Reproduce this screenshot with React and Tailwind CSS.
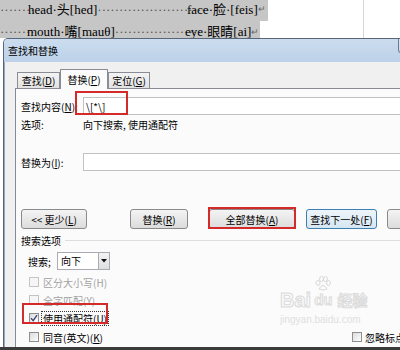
import React from "react";

function Dots({ n, className = "" }) {
  return <span className={`whitespace-nowrap text-[#555] ${className}`}>{"·".repeat(n)}</span>;
}

function Tab({ active, className = "", children }) {
  return (
    <div
      className={`flex items-center justify-center border border-b-0 border-[#898c95] ${
        active
          ? "relative z-10 -mb-px h-[20px] bg-[#fbfbfb]"
          : "h-[16px] bg-gradient-to-b from-[#f3f3f3] to-[#e3e3e3]"
      } ${className}`}
    >
      {children}
    </div>
  );
}

function Btn({ className = "", blue, children }) {
  return (
    <div
      className={`flex h-[20px] items-center justify-center rounded-[3px] border ${
        blue
          ? "border-[#3c7fb1] bg-gradient-to-b from-[#eef5fa] to-[#d6e6f2]"
          : "border-[#8a8a8a] bg-gradient-to-b from-[#f4f4f4] to-[#dcdcdc]"
      } ${className}`}
    >
      {children}
    </div>
  );
}

function Check({ checked, disabled }) {
  return (
    <span
      className={`flex h-[10px] w-[10px] shrink-0 items-center justify-center border ${
        disabled ? "border-[#c4c4c4] bg-[#f6f6f6]" : "border-[#8e8f8f] bg-gradient-to-br from-[#dcdcdc] to-[#fdfdfd]"
      }`}
    >
      {checked && (
        <svg width="8" height="8" viewBox="0 0 8 8">
          <path d="M1 4.2 L3.2 6.6 L7 1.2" fill="none" stroke="#3b4a7a" strokeWidth="1.4" />
        </svg>
      )}
    </span>
  );
}

export default function App() {
  return (
    <div className="relative h-[350px] w-[400px] overflow-hidden bg-white font-['Noto_Sans_CJK_SC',sans-serif] text-[10px] text-black">
      {/* document behind the dialog */}
      <div className="flex h-[38px] font-['Liberation_Serif','Noto_Sans_CJK_SC',serif] text-[13px]">
        <div className="flex w-[363px] flex-col">
          <div className="flex h-[21px] leading-[19px]">
            <div className="flex w-[268px] bg-[#c6c6c6]">
              <div className="flex w-[187px] shrink-0">
                <Dots n={8} className="w-[28px] shrink-0" />
                <span className="whitespace-nowrap">head·头[hed]</span>
                <Dots n={26} />
              </div>
              <span className="whitespace-nowrap">face·脸·[feis]</span>
              <span className="text-[9px] text-[#666]">↵</span>
            </div>
          </div>
          <div className="flex h-[17px] overflow-hidden leading-[22px]">
            <div className="flex w-[260px] bg-[#c6c6c6]">
              <div className="flex w-[185px] shrink-0">
                <Dots n={8} className="w-[27px] shrink-0" />
                <span className="whitespace-nowrap">mouth·嘴[mauθ]</span>
                <Dots n={20} />
              </div>
              <span className="whitespace-nowrap">eye·眼睛[ai]</span>
              <span className="text-[9px] text-[#666]">↵</span>
            </div>
          </div>
        </div>
        <div className="flex-1 border-l border-[#d6d6d6]" />
      </div>

      {/* dialog */}
      <div className="ml-[3px] flex h-[309px] w-[440px] flex-col overflow-hidden rounded-t-[5px] border border-b-0 border-[#56677c] bg-[#f0f0f0]">
        <div className="flex h-[23px] shrink-0 items-start justify-between bg-gradient-to-b from-[#cbdcee] to-[#bcd1e8]">
          <span className="pl-[4px] leading-[24px]">查找和替换</span>
          <div className="h-[14px] w-[44px] rounded-b-[3px] border border-t-0 border-[#6a7b90] bg-gradient-to-b from-[#dbe6f2] to-[#c5d6e9]" />
        </div>

        <div className="flex flex-1 flex-col border-l border-[#9aa6b5]">
          <div className="flex h-[26px] shrink-0 items-end pl-[12px]">
            <Tab className="w-[43px]">
              查找(<u>D</u>)
            </Tab>
            <Tab active className="w-[48px]">
              替换(<u>P</u>)
            </Tab>
            <Tab className="w-[42px]">
              定位(<u>G</u>)
            </Tab>
          </div>

          <div className="ml-[10px] flex-1 border-l border-t border-[#898c95] bg-[#fbfbfb] pl-[5px]">
            <div className="mt-[8px] flex h-[18px] items-center">
              <span className="w-[62px] shrink-0">
                查找内容(<u>N</u>):
              </span>
              <div className="flex h-[18px] flex-1 items-center border border-[#c2c2c2] bg-white pl-[2px]">\[*\]</div>
            </div>
            <div className="flex h-[18px] items-center">
              <span className="w-[62px] shrink-0">选项:</span>
              <span>向下搜索, 使用通配符</span>
            </div>
            <div className="mt-[20px] flex h-[18px] items-center">
              <span className="w-[62px] shrink-0">
                替换为(<u>I</u>):
              </span>
              <div className="h-[18px] flex-1 border border-[#c2c2c2] bg-white" />
            </div>

            <div className="mt-[38px] flex h-[20px]">
              <Btn className="w-[66px] shrink-0">
                &lt;&lt; 更少(<u>L</u>)
              </Btn>
              <Btn className="ml-[43px] w-[58px] shrink-0">
                替换(<u>R</u>)
              </Btn>
              <Btn className="ml-[21px] w-[86px] shrink-0">
                全部替换(<u>A</u>)
              </Btn>
              <Btn blue className="ml-[11px] w-[71px] shrink-0">
                查找下一处(<u>F</u>)
              </Btn>
              <Btn className="ml-[10px] w-[70px] shrink-0">取消</Btn>
            </div>

            <div className="mt-[4px] flex h-[14px] items-center">
              <span>搜索选项</span>
              <div className="ml-[4px] h-px flex-1 bg-[#dedede]" />
            </div>

            <div className="mt-[5px] flex h-[18px] items-center">
              <span className="ml-[7px] w-[29px] shrink-0">搜索;</span>
              <div className="flex h-[18px] w-[53px] border border-[#a9abb2] bg-white">
                <span className="flex-1 pl-[3px] leading-[16px]">向下</span>
                <div className="flex w-[11px] items-center justify-center border-l border-[#a9abb2] bg-gradient-to-b from-[#f4f4f4] to-[#dedede]">
                  <svg width="6" height="4" viewBox="0 0 6 4">
                    <polygon points="0,0 6,0 3,3.5" fill="#111" />
                  </svg>
                </div>
              </div>
            </div>

            <div className="mt-[3px] flex h-[18px] items-center gap-[4px] pl-[8px] text-[#a2a2a2]">
              <Check disabled />
              <span>区分大小写(H)</span>
            </div>
            <div className="flex h-[18px] items-center gap-[4px] pl-[8px] text-[#a2a2a2]">
              <Check disabled />
              <span>全字匹配(Y)</span>
            </div>
            <div className="flex h-[18px] items-center gap-[2px] pl-[8px]">
              <Check checked />
              <span className="border border-dotted border-[#333] px-[1px] leading-[13px]">使用通配符(U)</span>
            </div>
            <div className="mt-[1px] flex h-[18px] items-center pl-[8px]">
              <div className="flex w-[323px] shrink-0 items-center gap-[4px]">
                <Check />
                <span>
                  同音(英文)(<u>K</u>)
                </span>
              </div>
              <div className="flex items-center gap-[3px] whitespace-nowrap">
                <Check />
                <span>忽略标点符号(S)</span>
              </div>
            </div>
          </div>
        </div>
      </div>
      <div className="h-[3px] bg-[#3b3b3b]" />

      {/* red annotation boxes */}
      <div className="absolute left-[75px] top-[91px] h-[24px] w-[53px] border-2 border-[#d42a2a]" />
      <div className="absolute left-[208px] top-[207px] h-[22px] w-[88px] border-2 border-[#d42a2a]" />
      <div className="absolute left-[22px] top-[303px] h-[21px] w-[86px] border-2 border-[#d42a2a]" />

      {/* watermark */}
      <div className="pointer-events-none absolute left-[280px] top-[290px] flex flex-col items-start">
        <div className="flex items-end font-['Liberation_Sans',sans-serif] text-[20px] font-bold leading-[20px] text-transparent [-webkit-text-stroke:1px_#dadada]">
          <span>Bai</span>
          <span className="relative ml-[1px] px-[2px] text-[15px]">
            <svg className="absolute left-[3px] top-[-14px]" width="16" height="15" viewBox="0 0 16 15">
              <g fill="none" stroke="#d8d8d8" strokeWidth="1">
                <ellipse cx="3" cy="7" rx="2" ry="2.5" />
                <ellipse cx="6.5" cy="3" rx="2" ry="2.5" />
                <ellipse cx="10.5" cy="3" rx="2" ry="2.5" />
                <ellipse cx="13.5" cy="7" rx="2" ry="2.5" />
                <path d="M4 13 Q8 6 12 13 Q8 15 4 13Z" />
              </g>
            </svg>
            du
          </span>
          <span className="ml-[3px] font-['Noto_Sans_CJK_SC',sans-serif] text-[15px]">经验</span>
        </div>
        <span className="mt-[5px] font-['Liberation_Sans',sans-serif] text-[10px] leading-[10px] text-[#e0e0e0]">jingyan.baidu.com</span>
      </div>
    </div>
  );
}
